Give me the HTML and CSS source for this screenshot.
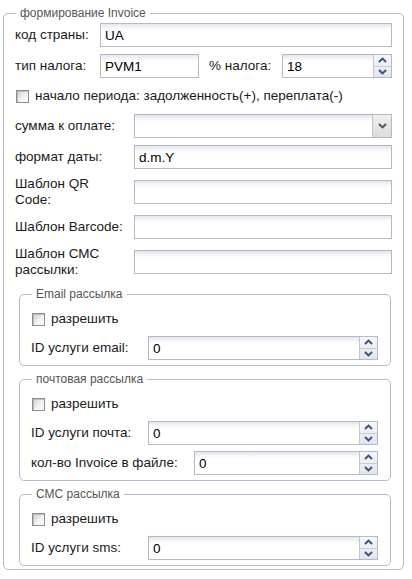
FILE: index.html
```html
<!DOCTYPE html>
<html>
<head>
<meta charset="utf-8">
<link rel="stylesheet" href="styles.css">
</head>
<body>
<fieldset class="fs outer">
  <legend>формирование Invoice</legend>
  <div class="stack">
    <div class="row">
      <label class="lbl w85">код страны:</label>
      <input class="text" type="text" value="UA">
    </div>
    <div class="row">
      <label class="lbl w85">тип налога:</label>
      <input class="text short" type="text" value="PVM1">
      <label class="lbl pct">% налога:</label>
      <div class="spin">
        <input type="text" value="18">
        <div class="trig">
          <span class="up"><svg width="9" height="6" viewBox="0 0 9 6"><path d="M1 5 L4.5 1.6 L8 5" fill="none" stroke="#33528e" stroke-width="2"/></svg></span>
          <span class="dn"><svg width="9" height="6" viewBox="0 0 9 6"><path d="M1 1 L4.5 4.4 L8 1" fill="none" stroke="#33528e" stroke-width="2"/></svg></span>
        </div>
      </div>
    </div>
    <div class="row chk-row">
      <span class="chk"></span>
      <span class="chk-lbl">начало периода: задолженность(+), переплата(-)</span>
    </div>
    <div class="row">
      <label class="lbl w119">сумма к оплате:</label>
      <div class="combo">
        <input type="text" value="">
        <div class="ctrig"><svg width="9" height="6" viewBox="0 0 9 6"><path d="M1 1 L4.5 4.4 L8 1" fill="none" stroke="#555" stroke-width="2"/></svg></div>
      </div>
    </div>
    <div class="row">
      <label class="lbl w119">формат даты:</label>
      <input class="text" type="text" value="d.m.Y">
    </div>
    <div class="row">
      <label class="lbl w119">Шаблон QR<br>Code:</label>
      <input class="text" type="text" value="">
    </div>
    <div class="row">
      <label class="lbl w119">Шаблон Barcode:</label>
      <input class="text" type="text" value="">
    </div>
    <div class="row">
      <label class="lbl w119">Шаблон СМС<br>рассылки:</label>
      <input class="text" type="text" value="">
    </div>

    <fieldset class="fs inner first">
      <legend>Email рассылка</legend>
      <div class="stack tight">
        <div class="row chk-row">
          <span class="chk"></span>
          <span class="chk-lbl">разрешить</span>
        </div>
        <div class="row">
          <label class="lbl w117">ID услуги email:</label>
          <div class="spin">
            <input type="text" value="0">
            <div class="trig">
              <span class="up"><svg width="9" height="6" viewBox="0 0 9 6"><path d="M1 5 L4.5 1.6 L8 5" fill="none" stroke="#33528e" stroke-width="2"/></svg></span>
              <span class="dn"><svg width="9" height="6" viewBox="0 0 9 6"><path d="M1 1 L4.5 4.4 L8 1" fill="none" stroke="#33528e" stroke-width="2"/></svg></span>
            </div>
          </div>
        </div>
      </div>
    </fieldset>

    <fieldset class="fs inner">
      <legend>почтовая рассылка</legend>
      <div class="stack tight">
        <div class="row chk-row">
          <span class="chk"></span>
          <span class="chk-lbl">разрешить</span>
        </div>
        <div class="row">
          <label class="lbl w117">ID услуги почта:</label>
          <div class="spin">
            <input type="text" value="0">
            <div class="trig">
              <span class="up"><svg width="9" height="6" viewBox="0 0 9 6"><path d="M1 5 L4.5 1.6 L8 5" fill="none" stroke="#33528e" stroke-width="2"/></svg></span>
              <span class="dn"><svg width="9" height="6" viewBox="0 0 9 6"><path d="M1 1 L4.5 4.4 L8 1" fill="none" stroke="#33528e" stroke-width="2"/></svg></span>
            </div>
          </div>
        </div>
        <div class="row">
          <label class="lbl w163">кол-во Invoice в файле:</label>
          <div class="spin">
            <input type="text" value="0">
            <div class="trig">
              <span class="up"><svg width="9" height="6" viewBox="0 0 9 6"><path d="M1 5 L4.5 1.6 L8 5" fill="none" stroke="#33528e" stroke-width="2"/></svg></span>
              <span class="dn"><svg width="9" height="6" viewBox="0 0 9 6"><path d="M1 1 L4.5 4.4 L8 1" fill="none" stroke="#33528e" stroke-width="2"/></svg></span>
            </div>
          </div>
        </div>
      </div>
    </fieldset>

    <fieldset class="fs inner">
      <legend>СМС рассылка</legend>
      <div class="stack tight">
        <div class="row chk-row">
          <span class="chk"></span>
          <span class="chk-lbl">разрешить</span>
        </div>
        <div class="row">
          <label class="lbl w117">ID услуги sms:</label>
          <div class="spin">
            <input type="text" value="0">
            <div class="trig">
              <span class="up"><svg width="9" height="6" viewBox="0 0 9 6"><path d="M1 5 L4.5 1.6 L8 5" fill="none" stroke="#33528e" stroke-width="2"/></svg></span>
              <span class="dn"><svg width="9" height="6" viewBox="0 0 9 6"><path d="M1 1 L4.5 4.4 L8 1" fill="none" stroke="#33528e" stroke-width="2"/></svg></span>
            </div>
          </div>
        </div>
      </div>
    </fieldset>
  </div>
</fieldset>
</body>
</html>
```

FILE: styles.css
```css
* { box-sizing: border-box; }
html, body { margin: 0; padding: 0; background: #fff; }
body {
  width: 412px;
  height: 579px;
  overflow: hidden;
  font-family: "Liberation Sans", Arial, sans-serif;
  font-size: 13.5px;
  line-height: 16px;
  color: #1a1a1a;
}
.fs {
  border: 1px solid #b5b8c8;
  border-radius: 5px;
  margin: 0;
  min-width: 0;
}
.fs legend {
  font-size: 12px;
  line-height: 14px;
  color: #555;
  padding: 0 4px;
  margin-left: 1px;
}
.outer {
  width: 401px;
  margin: 6px 0 0 3px;
  padding: 3px 11px 3px 11px;
}
.stack {
  display: flex;
  flex-direction: column;
  gap: 7px;
}
.stack.tight { gap: 6px; }
.row {
  display: flex;
  align-items: center;
}
.lbl { flex: none; }
.w85 { width: 85px; }
.w119 { width: 119px; }
.w117 { width: 117px; }
.w163 { width: 163px; }
.pct { width: 83px; padding-left: 10px; }

.text, .spin input, .combo input {
  font: inherit;
  color: #000;
  height: 24px;
  padding: 0 4px;
  outline: none;
  min-width: 0;
}
.text {
  flex: 1;
  border: 1px solid #b5b8c8;
  background: linear-gradient(#e4e6eb, #fbfbfc 5px, #fff 8px);
}
.text.short { flex: none; width: 99px; }

.spin, .combo {
  flex: 1;
  display: flex;
  height: 24px;
  border: 1px solid #b5b8c8;
  min-width: 0;
}
.spin input, .combo input {
  flex: 1;
  height: 22px;
  border: 0;
  background: linear-gradient(#e4e6eb, #fbfbfc 5px, #fff 8px);
}
.trig {
  flex: none;
  width: 18px;
  border-left: 1px solid #c3c6d2;
  display: flex;
  flex-direction: column;
  background: linear-gradient(#f7f7f8, #e4e5e8);
}
.trig span {
  flex: 1;
  display: flex;
  align-items: center;
  justify-content: center;
}
.trig .up { border-bottom: 1px solid #c9ccd6; }
.trig svg { display: block; }
.ctrig {
  flex: none;
  width: 19px;
  border-left: 1px solid #c8c8c8;
  background: linear-gradient(#efefef, #dcdcdc);
  display: flex;
  align-items: center;
  justify-content: center;
}

.chk-row { height: 22px; }
.chk {
  flex: none;
  width: 13px;
  height: 13px;
  margin-left: 1px;
  margin-right: 6px;
  border: 1px solid #8e8e8e;
  background: linear-gradient(135deg, #cfcfcf, #f4f4f4 60%, #fdfdfd);
  box-shadow: inset 1px 1px 0 #bdbdbd;
}

.inner {
  padding: 7px 12px 5px 11px;
  margin-left: 4px;
  margin-right: 1px;
}
.inner.first { margin-top: 2px; }
.inner + .inner { margin-top: -1px; }
```
